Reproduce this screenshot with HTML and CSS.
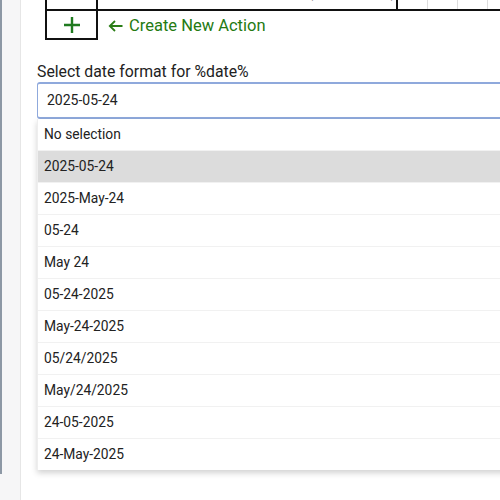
FILE: index.html
```html
<!DOCTYPE html>
<html lang="en">
<head>
    <meta charset="UTF-8">
    <meta name="viewport" content="width=device-width, initial-scale=1.0">
    <title>Date format</title>
    <link rel="stylesheet" href="styles.css">
</head>
<body>
    <div class="sidebar">
        <div class="sidebar-edge"></div>
    </div>

    <div class="main">
        <!-- Actions table (scrolled, top row cut off) -->
        <div class="actions">
            <div class="row row-top">
                <div class="cell c-num"></div>
                <div class="cell c-text"><span class="say">jump</span><span class="arg">(hello world)</span></div>
                <div class="cell c-a"></div>
                <div class="cell c-b"></div>
                <div class="cell c-b"></div>
                <div class="cell c-b"></div>
            </div>
            <div class="row row-new">
                <div class="cell c-num add">
                    <svg width="18" height="18" viewBox="0 0 18 18">
                        <path d="M9 1v16M1 9h16" stroke="#1f7a1f" stroke-width="2.4" fill="none"/>
                    </svg>
                </div>
                <div class="create">
                    <svg class="arrow" width="15" height="12" viewBox="0 0 15 12">
                        <path d="M14.5 6H2M7 1L1.8 6L7 11" stroke="#2a7d16" stroke-width="1.8" fill="none"/>
                    </svg>
                    <span>Create New Action</span>
                </div>
            </div>
        </div>

        <!-- Date format select -->
        <div class="field">
            <label class="field-label">Select date format for %date%</label>
            <div class="select">2025-05-24</div>
            <ul class="options">
                <li>No selection</li>
                <li class="active">2025-05-24</li>
                <li>2025-May-24</li>
                <li>05-24</li>
                <li>May 24</li>
                <li>05-24-2025</li>
                <li>May-24-2025</li>
                <li>05/24/2025</li>
                <li>May/24/2025</li>
                <li>24-05-2025</li>
                <li>24-May-2025</li>
            </ul>
        </div>
    </div>
</body>
</html>
```

FILE: styles.css
```css
html, body {
    height: 100%;
}
body {
    display: flex;
    margin: 0;
    background-color: #fff;
    font-family: Roboto, "Liberation Sans", sans-serif;
    color: #222;
    overflow: hidden;
}
.sidebar {
    display: flex;
    width: 20px;
    height: 100%;
    flex-shrink: 0;
    background-color: #f6f6f7;
    border-right: 1px solid #e6e6e6;
}
.sidebar-edge {
    width: 2px;
    height: 474px;
    background-color: #8d98a5;
}
.main {
    flex: 1;
    padding-left: 16px;
    min-width: 0;
    overflow: hidden;
}

/* actions table */
.actions {
    margin-left: 8px;
    margin-top: -19px;
    width: 520px;
}
.row {
    display: flex;
}
.row-top {
    height: 28px;
    border-bottom: 2px solid #111;
}
.row-top .cell {
    height: 28px;
    overflow: hidden;
}
.cell {
    box-sizing: border-box;
}
.c-num {
    width: 53px;
    border-left: 2px solid #111;
    border-right: 2px solid #111;
}
.c-text {
    width: 300px;
    padding-left: 2px;
    padding-top: 3px;
    border-right: 2px solid #111;
    font-size: 16px;
    line-height: 16px;
    white-space: nowrap;
}
.say {
    color: #7a1a9a;
}
.arg {
    margin-left: 172px;
}
.c-a, .c-b {
    width: 30px;
    border-right: 1px solid #ddd;
}
.row-new {
    height: 29px;
    align-items: center;
}
.add {
    height: 29px;
    border-bottom: 2px solid #111;
    display: flex;
    align-items: center;
    justify-content: center;
}
.create {
    display: flex;
    align-items: center;
    margin-left: 10px;
    color: #247a12;
    font-size: 16.5px;
}
.arrow {
    margin-right: 6px;
    margin-top: 1px;
}

/* select */
.field {
    width: 500px;
    margin-top: 22px;
}
.field-label {
    display: block;
    font-size: 15.8px;
    margin-bottom: 1px;
}
.select {
    box-sizing: border-box;
    height: 37px;
    padding: 0 9px;
    border: 1px solid #8fa9dc;
    border-top-width: 2px;
    border-bottom-width: 2px;
    border-radius: 3px 0 0 3px;
    font-size: 14px;
    line-height: 33px;
}
.options {
    list-style: none;
    margin: 0;
    padding: 0;
    background-color: #fff;
    border-left: 1px solid #eee;
    box-shadow: 0 3px 6px rgba(0, 0, 0, 0.18);
}
.options li {
    height: 31px;
    padding-left: 6px;
    font-size: 13.8px;
    line-height: 31px;
    border-bottom: 1px solid #f1f1f1;
}
.options li:last-child {
    border-bottom: none;
}
.options li.active {
    background-color: #dcdcdc;
}
```
